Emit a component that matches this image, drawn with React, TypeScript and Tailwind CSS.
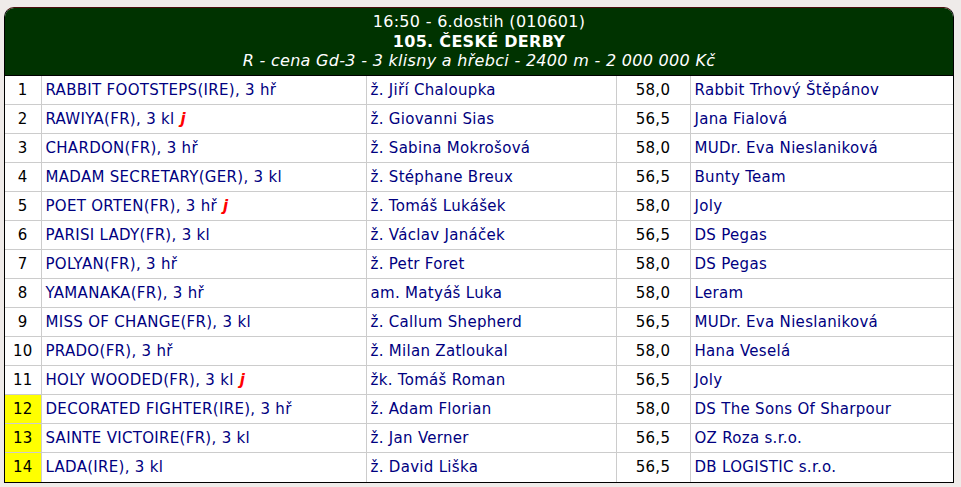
import React from "react";

type Row = { n: number; horse: string; j?: boolean; jockey: string; w: string; owner: string; y?: boolean };

const rows: Row[] = [
  { n: 1, horse: "RABBIT FOOTSTEPS(IRE), 3 hř", jockey: "ž. Jiří Chaloupka", w: "58,0", owner: "Rabbit Trhový Štěpánov" },
  { n: 2, horse: "RAWIYA(FR), 3 kl", j: true, jockey: "ž. Giovanni Sias", w: "56,5", owner: "Jana Fialová" },
  { n: 3, horse: "CHARDON(FR), 3 hř", jockey: "ž. Sabina Mokrošová", w: "58,0", owner: "MUDr. Eva Nieslaniková" },
  { n: 4, horse: "MADAM SECRETARY(GER), 3 kl", jockey: "ž. Stéphane Breux", w: "56,5", owner: "Bunty Team" },
  { n: 5, horse: "POET ORTEN(FR), 3 hř", j: true, jockey: "ž. Tomáš Lukášek", w: "58,0", owner: "Joly" },
  { n: 6, horse: "PARISI LADY(FR), 3 kl", jockey: "ž. Václav Janáček", w: "56,5", owner: "DS Pegas" },
  { n: 7, horse: "POLYAN(FR), 3 hř", jockey: "ž. Petr Foret", w: "58,0", owner: "DS Pegas" },
  { n: 8, horse: "YAMANAKA(FR), 3 hř", jockey: "am. Matyáš Luka", w: "58,0", owner: "Leram" },
  { n: 9, horse: "MISS OF CHANGE(FR), 3 kl", jockey: "ž. Callum Shepherd", w: "56,5", owner: "MUDr. Eva Nieslaniková" },
  { n: 10, horse: "PRADO(FR), 3 hř", jockey: "ž. Milan Zatloukal", w: "58,0", owner: "Hana Veselá" },
  { n: 11, horse: "HOLY WOODED(FR), 3 kl", j: true, jockey: "žk. Tomáš Roman", w: "56,5", owner: "Joly" },
  { n: 12, horse: "DECORATED FIGHTER(IRE), 3 hř", jockey: "ž. Adam Florian", w: "58,0", owner: "DS The Sons Of Sharpour", y: true },
  { n: 13, horse: "SAINTE VICTOIRE(FR), 3 kl", jockey: "ž. Jan Verner", w: "56,5", owner: "OZ Roza s.r.o.", y: true },
  { n: 14, horse: "LADA(IRE), 3 kl", jockey: "ž. David Liška", w: "56,5", owner: "DB LOGISTIC s.r.o.", y: true },
];

export default function App() {
  return (
    <div
      className="w-[961px] h-[487px] overflow-hidden bg-[#efebe9] pt-[7px] pl-[4px]"
      style={{ fontFamily: '"DejaVu Sans", Verdana, sans-serif' }}
    >
      <div className="w-[950px] border border-black border-t-[#4a0d0d] rounded-t-[10px] overflow-hidden bg-white">
        <div className="bg-[#003300] text-white text-center text-[16px] tracking-[0.3px] leading-[19.5px] pt-[4px] pb-[4px] border-b border-black">
          <div>16:50 - 6.dostih (010601)</div>
          <div className="font-bold">105. ČESKÉ DERBY</div>
          <div className="italic">R - cena Gd-3 - 3 klisny a hřebci - 2400 m - 2 000 000 Kč</div>
        </div>
        <table className="w-full table-fixed border-collapse text-[15px] tracking-[0.3px]">
          <colgroup>
            <col className="w-[36px]" />
            <col className="w-[325px]" />
            <col className="w-[250px]" />
            <col className="w-[74px]" />
            <col />
          </colgroup>
          <tbody>
            {rows.map((r, i) => (
              <tr key={r.n} className="h-[29px]">
                <td
                  className={`text-center text-black border-r border-[#cccccc] ${i > 0 ? "border-t" : ""} ${r.y ? "bg-[#ffff00]" : ""}`}
                >
                  {r.n}
                </td>
                <td className={`px-[4px] text-[#000080] border-r border-[#cccccc] whitespace-nowrap ${i > 0 ? "border-t" : ""}`}>
                  {r.horse}
                  {r.j && <span className="text-[#ff0000] italic font-bold ml-[6px]">j</span>}
                </td>
                <td className={`px-[4px] text-[#000080] border-r border-[#cccccc] whitespace-nowrap ${i > 0 ? "border-t" : ""}`}>
                  {r.jockey}
                </td>
                <td className={`text-center text-black border-r border-[#cccccc] ${i > 0 ? "border-t" : ""}`}>{r.w}</td>
                <td className={`px-[4px] text-[#000080] whitespace-nowrap border-[#cccccc] ${i > 0 ? "border-t" : ""}`}>{r.owner}</td>
              </tr>
            ))}
          </tbody>
        </table>
      </div>
    </div>
  );
}
